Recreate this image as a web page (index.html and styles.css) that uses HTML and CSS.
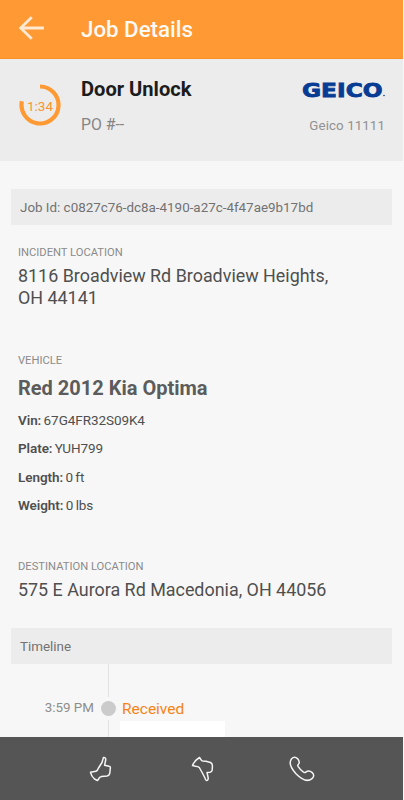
FILE: index.html
```html
<!DOCTYPE html>
<html lang="en">
<head>
<meta charset="utf-8">
<title>Job Details</title>
<link rel="stylesheet" href="styles.css">
</head>
<body>
<div class="screen">
  <header class="topbar">
    <svg class="back" width="28" height="28" viewBox="0 0 28 28"><path d="M27 13H4M14.700 2.200L3.700 13l11 10.800"/></svg>
    <h1>Job Details</h1>
  </header>
  <section class="summary">
    <div class="timer">
      <svg width="42" height="42" viewBox="0 0 42 42"><path d="M21 2.500A18.500 18.500 0 1 1 2.900 17.200"/></svg>
      <span>1:34</span>
    </div>
    <div class="job">
      <h2>Door Unlock</h2>
      <p>PO #--</p>
    </div>
    <div class="client">
      <svg class="logo" width="82" height="18" viewBox="0 0 82 18"><text class="brand" x="-1" y="15.800" textLength="80.500" lengthAdjust="spacingAndGlyphs">GEICO</text><circle cx="81" cy="14.500" r=".8"/></svg>
      <p>Geico 11111</p>
    </div>
  </section>
  <main>
    <div class="band jobid">Job Id: c0827c76-dc8a-4190-a27c-4f47ae9b17bd</div>
    <section class="incident">
      <h3 class="label">INCIDENT LOCATION</h3>
      <p class="address">8116 Broadview Rd Broadview Heights,<br>OH 44141</p>
    </section>
    <section class="vehicle">
      <h3 class="label">VEHICLE</h3>
      <h2>Red 2012 Kia Optima</h2>
      <p><b>Vin:</b> 67G4FR32S09K4</p>
      <p><b>Plate:</b> YUH799</p>
      <p><b>Length:</b> 0 ft</p>
      <p><b>Weight:</b> 0 lbs</p>
    </section>
    <section class="destination">
      <h3 class="label">DESTINATION LOCATION</h3>
      <p class="address">575 E Aurora Rd Macedonia, OH 44056</p>
    </section>
    <div class="band">Timeline</div>
    <div class="timeline">
      <time>3:59 PM</time>
      <div class="rail"><i class="before"></i><i class="dot"></i><i class="after"></i></div>
      <div class="event"><span>Received</span><div class="note"></div></div>
    </div>
  </main>
  <footer>
    <svg width="24" height="26" viewBox="0 0 24 26"><path d="M14.400 1.600C16.200 1.300 17 2.500 16.700 4L15.600 9.300L20 10.300Q21.700 10.500 21.300 12.500L20.800 17Q20.500 19.500 18 20L12.500 20.500Q10 21 9.400 23.500L8.500 24.500L5.500 23Q2.500 20.500 1.500 16.300L7 15.300Q8.600 14.500 9.500 12L13 6.500Z"/></svg>
    <svg width="24" height="26" viewBox="0 0 24 26"><path d="M1.500 9.500Q3.500 4.500 8.500 1.500L10.700 4.700Q12.200 5.500 15 5.300L19.500 6.500Q21.500 7.500 21.400 10L21.200 14Q21 16 19 16.200L16 16.400L17.200 22Q17.300 24.500 15.500 24.500Q14.300 24.300 14 22L11.400 17L8.300 11.500Q7 10.200 4.500 10.200Z"/></svg>
    <svg width="26" height="26" viewBox="0 0 26 26"><path d="M2.600 2.700Q5.500-.2 8.500 2.600Q11.500 6.200 9.400 8.300Q8.300 9.200 9.200 10.700Q11.500 14.300 14.500 16.200Q16 17 17 15.900Q20 13.600 23.200 16.600Q26.200 19.800 23 22.600C17.800 27 11.700 22.500 7 17.700C2.700 13-.8 7 2.600 2.700Z"/></svg>
  </footer>
</div>
</body>
</html>
```
FILE: styles.css
```css
* { box-sizing: border-box; }
body, h1, h2, h3, p { margin: 0; }
body { background: #f7f7f7; font-family: Roboto, sans-serif; font-weight: 400; color: #4f4f4f; overflow: hidden; }
.screen { width: 403px; height: 800px; display: flex; flex-direction: column; background: #f7f7f7; }
.topbar { height: 59px; flex: none; background: #ff9933; border-bottom: 1px solid #f79226; display: flex; align-items: center; padding-left: 17px; }
.back { fill: none; stroke: #ffe9d2; stroke-width: 2.8; }
h1 { margin-left: 36px; font-size: 22.3px; line-height: 28px; font-weight: 500; color: #fffaf3; }
.summary { height: 102px; flex: none; background: #ececec; display: flex; padding: 0 18px 0 19px; }
.timer { width: 42px; height: 42px; margin-top: 25px; display: grid; place-items: center; }
.timer > * { grid-area: 1 / 1; }
.timer path { fill: none; stroke: #ff9933; stroke-width: 4.2; }
.timer span { font-size: 13.5px; color: #fa9430; line-height: 18px; padding-top: 1px; }
.job { margin-left: 20px; padding-top: 17px; }
.job h2 { font-size: 20.1px; line-height: 26px; font-weight: 700; color: #1c1c1c; }
.job p { margin-top: 13px; font-size: 15.8px; line-height: 20px; color: #858585; }
.client { margin-left: auto; padding-top: 22px; display: flex; flex-direction: column; align-items: flex-end; }
.logo { fill: #083c94; overflow: visible; }
.brand { font: bold 19px "DejaVu Sans", sans-serif; stroke: #083c94; stroke-width: .8; }
.client p { margin-top: 18px; font-size: 13.3px; line-height: 18px; letter-spacing: .1px; color: #919191; }
main { flex: 1; min-height: 0; padding: 28px 11px 0; overflow: hidden; }
.band { height: 36px; background: #ececec; padding-left: 9px; font-size: 13.4px; line-height: 38px; color: #727272; }
section .label { font-size: 11.2px; line-height: 14px; font-weight: 400; color: #8b8b8b; }
main section { padding-left: 7px; }
.incident { height: 108px; padding-top: 21px; }
.address { font-size: 17.9px; line-height: 21.6px; margin-top: 5px; }
.vehicle { height: 206px; padding-top: 21px; }
.vehicle h2 { margin: 7px 0 10px; font-size: 20px; line-height: 26px; color: #5c5c5c; }
.vehicle p { font-size: 13.5px; line-height: 18px; margin-bottom: 10.400px; word-spacing: -.9px; letter-spacing: -.07px; }
.vehicle b { font-weight: 600; }
.destination { height: 89px; padding-top: 21px; }
.timeline { display: flex; height: 74px; }
.timeline time { width: 83px; text-align: right; padding-top: 35px; font-size: 13.4px; line-height: 18px; color: #8d8d8d; }
.rail { width: 15px; margin: 0 6px 0 7px; display: flex; flex-direction: column; align-items: center; }
.rail i { width: 1px; background: #e2e2e2; }
.rail .before { height: 33px; }
.rail .dot { width: 15px; height: 15px; flex: none; margin: 4px 0; border-radius: 50%; background: #cbcbcb; }
.rail .after { flex: 1; }
.event { padding-top: 35px; font-size: 15.5px; line-height: 20px; color: #f68316; }
.note { width: 105px; height: 20px; margin: 2px 0 0 -2px; background: #fff; }
footer { height: 63px; flex: none; background: #555; display: flex; align-items: center; padding-left: 89px; }
footer svg { fill: none; stroke: #f5f5f5; stroke-width: 1.5; stroke-linejoin: round; }
footer svg + svg { margin-left: 78px; }
footer svg:last-child { margin-left: 74px; }
```
